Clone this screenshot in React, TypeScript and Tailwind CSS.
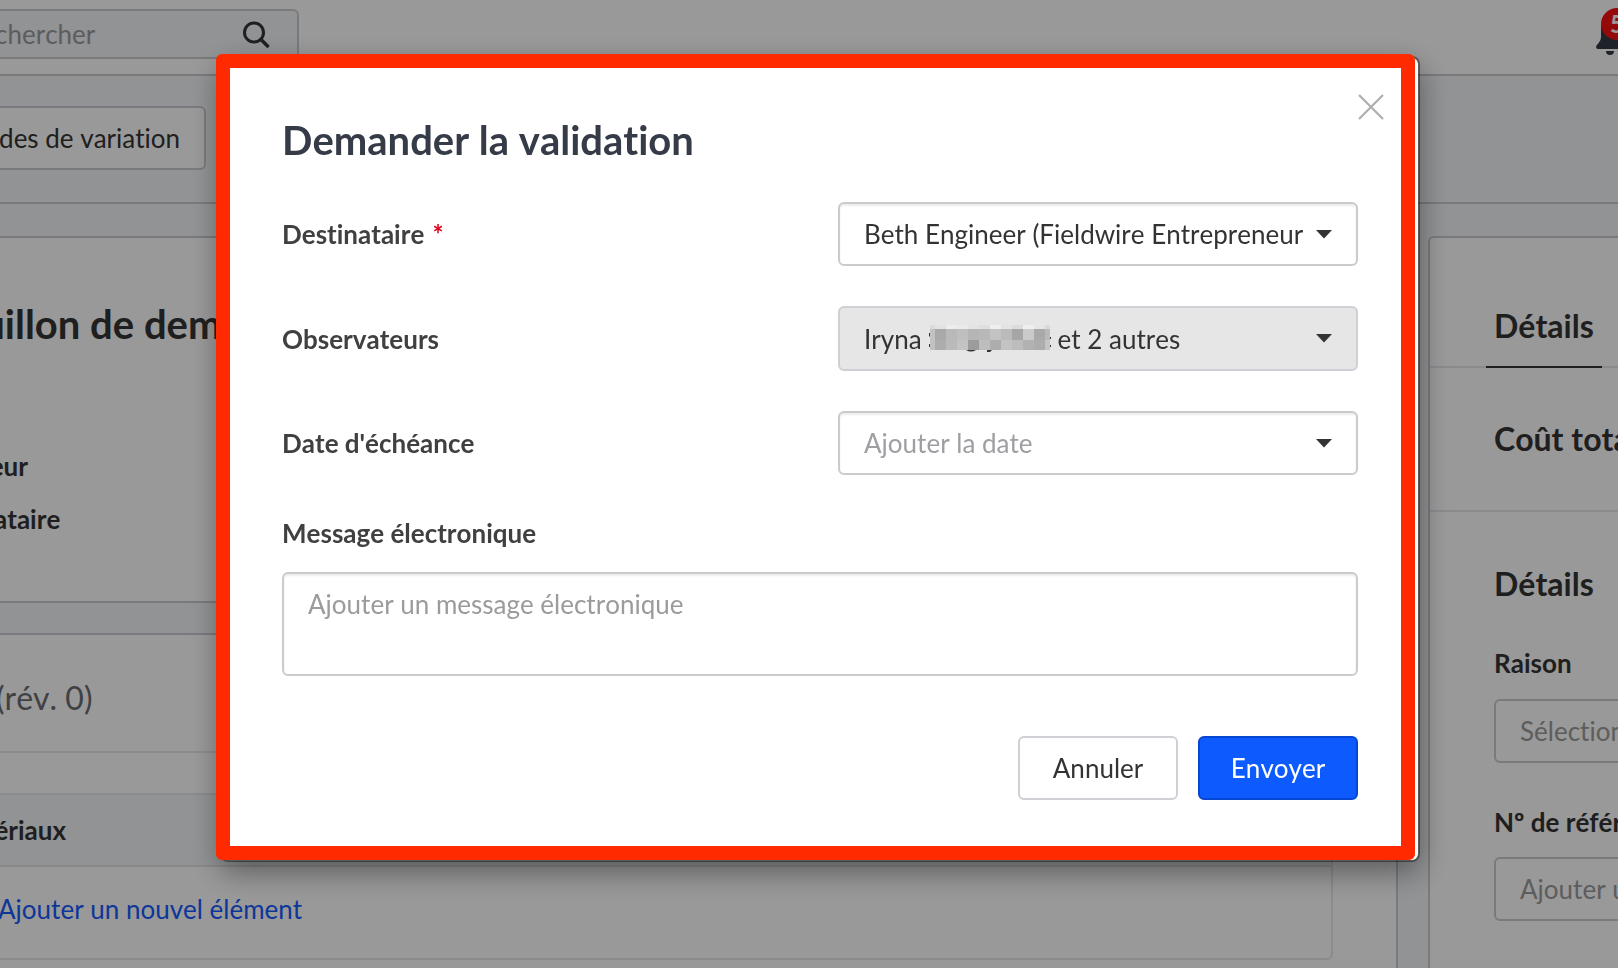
import { useState } from 'react';
import type { ReactNode } from 'react';

// pixelated tiles covering the watcher's last name
const tileRows = [
  { y: 0, h: 4, fills: ['#dcdcdc', '#e2e2e2', '#ededed', '#eaeaea', '#e4e4e4', '#dedede', '#efefef', '#e3e3e3', '#dcdcdc', '#efefef', '#e6e6e6', '#dadada'] },
  { y: 4, h: 11, fills: ['#c2c2c2', '#a9a9a9', '#b9b9b9', '#bfbfbf', '#b5b5b5', '#b8b8b8', '#c3c3c3', '#bbbbbb', '#a6a6a6', '#cacaca', '#a9a9a9', '#b9b9b9'] },
  { y: 15, h: 10, fills: ['#c2c2c2', '#adadad', '#bababa', '#c3c3c3', '#9c9c9c', '#bdbdbd', '#adadad', '#c3c3c3', '#bcbcbc', '#b2b2b2', '#adadad', '#c6c6c6'] },
];

const Mosaic = (): JSX.Element => (
  <svg width="122" height="28" viewBox="0 0 122 28" aria-hidden="true">
    <path d="M1 8h-1v3l2 2M0 19h2v3h-2zM37 25q5 3 10 0zM58 25h5l-2 2h-3zM121 12h1v2h-1zM121 20h1v2h-1z" fill="#333" />
    {tileRows.map((row) =>
      row.fills.map((fill, i) => (
        <rect
          key={`${row.y}-${i}`}
          x={i === 0 ? 1 : 6 + (i - 1) * 11}
          y={row.y}
          width={i === 0 ? 5 : i === 11 ? 5 : 11}
          height={row.h}
          fill={fill}
          shapeRendering="crispEdges"
        />
      ))
    )}
  </svg>
);

const Caret = (): JSX.Element => (
  <svg width="16" height="9" viewBox="0 0 16 9" className="shrink-0" aria-hidden="true">
    <path d="M0 0h16L8 8.500z" fill="#333" />
  </svg>
);

const Card = ({ children }: { children: ReactNode }): JSX.Element => (
  <section className="border-2 border-[#cbccd2] rounded-md bg-white overflow-hidden">{children}</section>
);

const Background = (): JSX.Element => (
  <div className="-ml-[179px] -mr-16 flex flex-col min-h-screen">
    {/* Top bar */}
    <header className="flex justify-between border-b-2 border-[#cbcbce] bg-white h-[76px] pt-[9px] pl-[118px] pr-[58px]">
      <div className="flex items-center w-[360px] h-[50px] border-2 border-[#cbcbce] rounded-md bg-[#f2f5f8] pl-6 pr-[27px]">
        <input type="text" aria-label="Rechercher" placeholder="Rechercher" className="w-full min-w-0 outline-none placeholder:text-[#9b9b9b]" />
        <button aria-label="Lancer la recherche" className="shrink-0">
          <svg width="28" height="28" viewBox="0 0 28 28" fill="none" stroke="#353535" strokeLinecap="round">
            <circle cx="12" cy="12.500" r="9.500" strokeWidth="3" />
            <path d="M19 19.500l6.500 6.500" strokeWidth="3.500" />
          </svg>
        </button>
      </div>
      <button aria-label="Notifications" className="relative w-7 h-[50px]">
        <svg width="28" height="44" viewBox="0 0 28 44" aria-hidden="true">
          <path d="M14 5C8 5 5 10 5 17v8c0 5-5 8-5 10q0 2 2 2h24q2 0 2-2c0-2-5-5-5-10v-8c0-7-3-12-9-12zM10 39h8q0 4-4 4t-4-4z" fill="#333a46" />
        </svg>
        <span className="absolute left-[5px] -top-px w-8 h-8 rounded-full bg-[#fa1010] text-white text-2xl leading-8 font-bold">5</span>
      </button>
    </header>

    {/* Toolbar */}
    <div className="flex border-b-2 border-[#cbccd2] pt-[30px] pb-8">
      <div className="flex justify-end w-[385px]">
        <button className="h-16 px-6 border-2 border-[#cbccd2] rounded-md bg-white">Demandes de variation</button>
      </div>
    </div>

    <main className="flex grow gap-[30px] pt-8 pl-8">
      <div className="flex flex-col grow gap-[30px]">
        <Card>
          <div className="px-[63px] pt-[62px] pb-[55px]">
            <h1 className="text-[40px] leading-[48px] font-bold">Brouillon de demande de variation</h1>
            <dl className="mt-[92px] font-bold leading-[53px]">
              <dt className="pl-2">Créateur</dt>
              <dt>Destinataire</dt>
            </dl>
          </div>
        </Card>
        <section className="grow border-2 border-b-0 border-[#cbccd2] rounded-t-md bg-white">
          <div className="flex items-center h-[118px] pt-2.5 pl-[141px] border-b-2 border-[#e7e8ea]">
            <h2 className="text-[32px] text-[#6c6d72]">(rév. 0)</h2>
          </div>
          <div className="mx-[63px] mt-10 border-2 border-[#e7e8ea] rounded-md overflow-hidden">
            <table className="w-full text-left">
              <thead>
                <tr className="h-[71px] bg-[#f2f5f8] border-b-2 border-[#e2e5e8]">
                  <th className="pl-[27px] font-bold">Matériaux</th>
                </tr>
              </thead>
              <tbody>
                <tr className="h-[92px]">
                  <td className="pl-[78px] pb-2">
                    <a href="#" className="text-[#165bff]">Ajouter un nouvel élément</a>
                  </td>
                </tr>
              </tbody>
            </table>
          </div>
        </section>
      </div>

      {/* Details column */}
      <aside className="w-[254px] shrink-0 border-2 border-b-0 border-[#cbccd2] rounded-t-md bg-white whitespace-nowrap overflow-hidden">
        <div className="flex h-[130px] pl-14 border-b-2 border-[#e7e8ea]">
          <button className="h-[130px] pt-16 pb-4 px-2 text-[32px] leading-[48px] font-bold border-b-2 border-[#353535]">Détails</button>
        </div>
        <div className="flex items-center h-36 pl-16 border-b-2 border-[#e7e8ea]">
          <h2 className="text-[32px] font-bold">Coût total</h2>
        </div>
        <div className="pl-16 pt-12">
          <h2 className="text-[32px] leading-[48px] font-bold">Détails</h2>
          <label htmlFor="reason" className="block mt-9 mb-[17px] leading-[38px] font-bold">Raison</label>
          <select id="reason" className="block appearance-none w-[400px] h-16 pl-6 border-2 border-[#cbcbcb] rounded-md text-[#9b9b9b]">
            <option>Sélectionner une raison</option>
          </select>
          <label htmlFor="reference" className="block mt-10 mb-4 leading-[38px] font-bold">Nº de référence</label>
          <input id="reference" placeholder="Ajouter un numéro" className="block w-[400px] h-16 pl-6 border-2 border-[#cbcbcb] rounded-md placeholder:text-[#9b9b9b]" />
        </div>
      </aside>
    </main>
  </div>
);

const App = (): JSX.Element => {
  const [dueDate, setDueDate] = useState('');
  const [message, setMessage] = useState('');

  return (
    <div className="h-screen overflow-hidden bg-[#f2f5f8] font-['Lato',sans-serif] [font-variant-ligatures:none] [font-kerning:none] text-[26px] leading-9 text-[#353535]">
      <Background />

      {/* Modal wrapper */}
      <div className="fixed inset-0 flex justify-center items-start bg-black/40 pt-14 pl-[22px]">
        <form
          role="dialog"
          aria-labelledby="dialog-title"
          onSubmit={(e) => e.preventDefault()}
          className="relative w-[1200px] max-w-full px-[60px] pt-[58px] pb-[60px] border-2 border-black/40 rounded-lg bg-white bg-clip-padding shadow-[0_10px_30px_rgba(0,0,0,0.4)]"
        >
          <div className="absolute -left-1.5 -top-1 right-[3px] bottom-0 border-[14px] border-[#ff2a00] rounded-md pointer-events-none" />
          <button type="button" aria-label="Fermer" className="absolute right-[34px] top-9">
            <svg width="26" height="26" viewBox="0 0 26 26" stroke="#aeaeae" strokeWidth="2.200">
              <path d="M1 1l24 24M25 1L1 25" />
            </svg>
          </button>

          <h1 id="dialog-title" className="mb-[38px] text-[40px] leading-[48px] font-bold text-[#363c47]">Demander la validation</h1>

          <div className="grid grid-cols-[1fr_520px] items-center gap-y-10">
            <label htmlFor="recipient" className="font-bold text-[#404040]">
              Destinataire <span className="ml-0.5 text-[#e0021b]">*</span>
            </label>
            <div className="relative">
              <select id="recipient" className="appearance-none w-full h-16 pl-6 pr-12 border-2 border-[#cbcbcb] rounded-md bg-white text-[#333] shadow-[inset_0_2px_2px_rgba(0,0,0,0.08)]">
                <option>Beth Engineer (Fieldwire Entrepreneur</option>
              </select>
              <span className="absolute inset-y-0 right-[26px] flex items-center pointer-events-none"><Caret /></span>
            </div>

            <label htmlFor="watchers" className="font-bold text-[#404040]">Observateurs</label>
            <button id="watchers" type="button" className="flex items-center justify-between h-[65px] pl-6 pr-6 border-2 border-[#cfd0d6] rounded-md bg-[#e6e6e6] text-[#333]">
              <span className="flex items-center gap-[7px]">
                Iryna <Mosaic /> et 2 autres
              </span>
              <Caret />
            </button>

            <label htmlFor="due-date" className="font-bold text-[#404040]">Date d'échéance</label>
            <div className="relative">
              <input
                id="due-date"
                value={dueDate}
                onChange={(e) => setDueDate(e.target.value)}
                placeholder="Ajouter la date"
                className="w-full h-16 pl-6 pr-12 border-2 border-[#cbcbcb] rounded-md shadow-[inset_0_2px_2px_rgba(0,0,0,0.08)] placeholder:text-[#9e9ea3]"
              />
              <span className="absolute inset-y-0 right-[26px] flex items-center pointer-events-none"><Caret /></span>
            </div>
          </div>

          <label htmlFor="message" className="block mt-10 mb-5 leading-[37px] font-bold text-[#404040]">Message électronique</label>
          <textarea
            id="message"
            value={message}
            onChange={(e) => setMessage(e.target.value)}
            placeholder="Ajouter un message électronique"
            className="block w-full h-[104px] px-6 py-3 border-2 border-[#cbcbcb] rounded-md resize-none shadow-[inset_0_2px_2px_rgba(0,0,0,0.08)] placeholder:text-[#9b9b9b]"
          />

          <div className="flex justify-end gap-5 mt-[60px]">
            <button type="button" className="w-40 h-16 border-2 border-[#cfd0d6] rounded-md text-[#333]">Annuler</button>
            <button type="submit" className="w-40 h-16 border-2 border-[#0546d2] rounded-md bg-[#0d5bff] text-white">Envoyer</button>
          </div>
        </form>
      </div>
    </div>
  );
};

export default App;
